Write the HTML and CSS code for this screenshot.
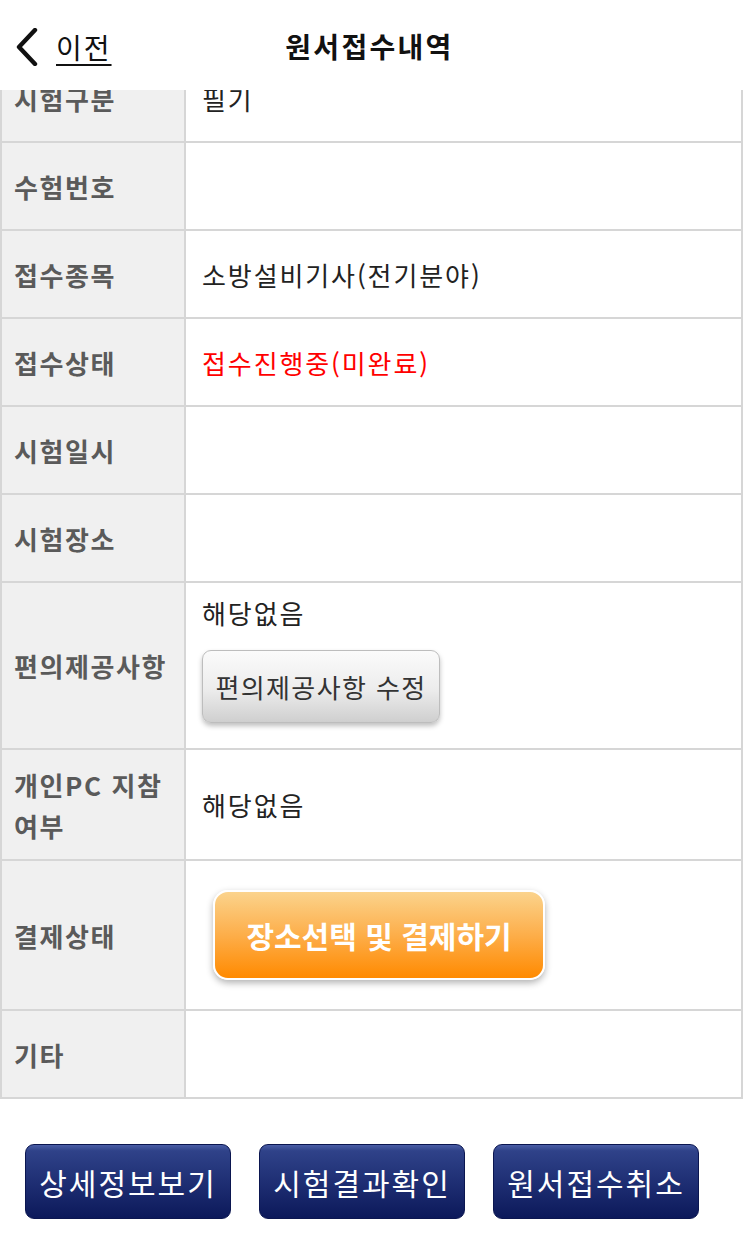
FILE: index.html
```html
<!DOCTYPE html>
<html lang="ko">
<head>
<meta charset="utf-8">
<title>원서접수내역</title>
<link rel="stylesheet" href="styles.css">
</head>
<body>
<header class="topbar">
  <a class="back" href="#">
    <svg class="chev" width="26" height="38" viewBox="0 0 26 38"><polyline points="21,2 5,19 21,36" fill="none" stroke="#111" stroke-width="4.4" stroke-linecap="round" stroke-linejoin="round"/></svg>
    <span class="back-text">이전</span>
  </a>
  <h1 class="title">원서접수내역</h1>
</header>
<main class="content">
  <div class="info">
    <div class="lbl r86">시험구분</div><div class="val r86">필기</div>
    <div class="lbl r86">수험번호</div><div class="val r86"></div>
    <div class="lbl r86">접수종목</div><div class="val r86">소방설비기사(전기분야)</div>
    <div class="lbl r86">접수상태</div><div class="val r86 red">접수진행중(미완료)</div>
    <div class="lbl r86">시험일시</div><div class="val r86"></div>
    <div class="lbl r86">시험장소</div><div class="val r86"></div>
    <div class="lbl r165">편의제공사항</div>
    <div class="val r165 stack">
      <span class="line">해당없음</span>
      <button class="btn-gray">편의제공사항 수정</button>
    </div>
    <div class="lbl r109 wrap">개인PC 지참 여부</div><div class="val r109">해당없음</div>
    <div class="lbl r148">결제상태</div>
    <div class="val r148"><button class="btn-orange">장소선택 및 결제하기</button></div>
    <div class="lbl r86">기타</div><div class="val r86"></div>
  </div>
  <div class="actions">
    <button class="btn-navy">상세정보보기</button>
    <button class="btn-navy">시험결과확인</button>
    <button class="btn-navy">원서접수취소</button>
  </div>
</main>
</body>
</html>
```
FILE: styles.css
```css
html, body {
  margin: 0;
  padding: 0;
  background: #fff;
  font-family: "Noto Sans CJK KR", "Noto Sans", sans-serif;
}
.topbar {
  position: fixed;
  top: 0;
  left: 0;
  right: 0;
  height: 90px;
  background: #fff;
  z-index: 10;
  display: flex;
  align-items: center;
  justify-content: center;
}
.back {
  position: absolute;
  left: 14px;
  top: 28px;
  display: flex;
  align-items: center;
  gap: 16px;
  color: #111;
  text-decoration: none;
}
.chev { display: block; }
.back-text {
  font-size: 28px;
  line-height: 36px;
  letter-spacing: 2px;
  text-decoration: underline;
  text-underline-offset: 5px;
  text-decoration-thickness: 2px;
}
.title {
  margin: 0;
  font-size: 28px;
  font-weight: 700;
  color: #111;
  line-height: 36px;
  letter-spacing: 2.3px;
  margin-top: 2px;
  margin-left: -4px;
}
.content {
  padding-top: 53px;
}
.info {
  display: grid;
  grid-template-columns: 182px 1fr;
  gap: 2px;
  padding: 2px;
  background: #d6d6d6;
}
.lbl {
  background: #f0f0f0;
  color: #5a5a5a;
  font-weight: 700;
  font-size: 26px;
  letter-spacing: 1.6px;
  padding: 0 10px 0 12px;
  display: flex;
  align-items: center;
  line-height: 41px;
}
.val {
  background: #fff;
  color: #222;
  font-size: 26px;
  letter-spacing: 1.9px;
  padding: 0 16px;
  display: flex;
  align-items: center;
}
.red { color: #ff0000; }
.r86 { height: 86px; }
.r165 { height: 165px; }
.r109 { height: 109px; }
.r148 { height: 148px; }
.stack {
  flex-direction: column;
  align-items: flex-start;
  justify-content: flex-start;
  padding-top: 12px;
  box-sizing: border-box;
}
.stack .line { line-height: 36px; }
.btn-gray {
  margin-top: 19px;
  width: 238px;
  height: 73px;
  font-family: inherit;
  font-size: 26px;
  letter-spacing: 1.4px;
  color: #333;
  border: 1px solid #bdbdbd;
  border-radius: 9px;
  background: linear-gradient(#fbfbfb 0%, #ececec 55%, #cfcfcf 100%);
  box-shadow: 0 3px 5px rgba(0,0,0,0.25);
  padding: 0;
}
.btn-orange {
  margin-left: 11px;
  width: 332px;
  height: 90px;
  border: 2px solid #fff;
  border-radius: 15px;
  background: linear-gradient(#fbd38c 0%, #fdae4a 50%, #ff8a00 100%);
  box-shadow: 0 3px 7px rgba(0,0,0,0.3);
  color: #fff;
  font-family: inherit;
  font-size: 30px;
  font-weight: 700;
  letter-spacing: 0;
  padding: 0;
}
.actions {
  display: flex;
  gap: 28px;
  padding: 45px 0 0 25px;
}
.btn-navy {
  width: 206px;
  height: 75px;
  border: 1px solid #0b1650;
  border-radius: 9px;
  background: linear-gradient(#4a5ea6 0%, #2f4289 8%, #1f2f74 50%, #0c195a 100%);
  color: #fff;
  font-family: inherit;
  font-size: 30px;
  letter-spacing: 2px;
  padding: 0;
}
```
